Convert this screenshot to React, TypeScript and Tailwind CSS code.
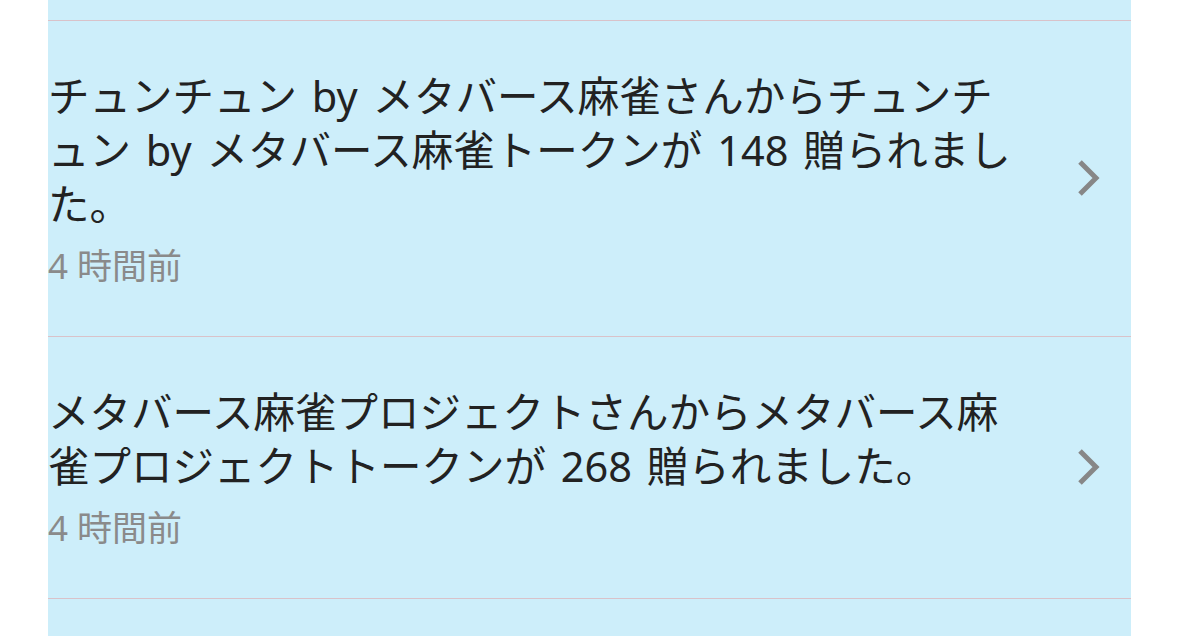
const items = [
  {
    text: "チュンチュン by メタバース麻雀さんからチュンチュン by メタバース麻雀トークンが 148 贈られました。",
    time: "4 時間前",
  },
  {
    text: "メタバース麻雀プロジェクトさんからメタバース麻雀プロジェクトトークンが 268 贈られました。",
    time: "4 時間前",
  },
];

function Chevron() {
  return (
    <svg width="24" height="38" viewBox="0 0 24 38" fill="none">
      <path d="M3 3 L19 19 L3 35" stroke="#878787" strokeWidth="5" strokeLinejoin="miter" />
    </svg>
  );
}

export default function App() {
  return (
    <div className="min-h-[636px] bg-white" style={{ fontFamily: '"Noto Sans", "Noto Sans CJK JP", sans-serif' }}>
      <div className="mx-[48px] h-[636px] overflow-hidden bg-[#cdeefa]">
        <div className="h-[20px]" />
        {items.map((item, i) => (
          <div key={i} className="flex items-center border-t border-[#d9c2c9] pt-[48px] pb-[49px]">
            <div className="flex-1 pr-[58px]">
              <p className="text-[41.5px] leading-[54px] text-[#222222] [word-spacing:4px]">{item.text}</p>
              <p className="mt-[14px] text-[35px] leading-[42px] text-[#8a8a8a]">{item.time}</p>
            </div>
            <div className="w-[54px] shrink-0">
              <Chevron />
            </div>
          </div>
        ))}
        <div className="border-t border-[#d9c2c9]" />
      </div>
    </div>
  );
}
